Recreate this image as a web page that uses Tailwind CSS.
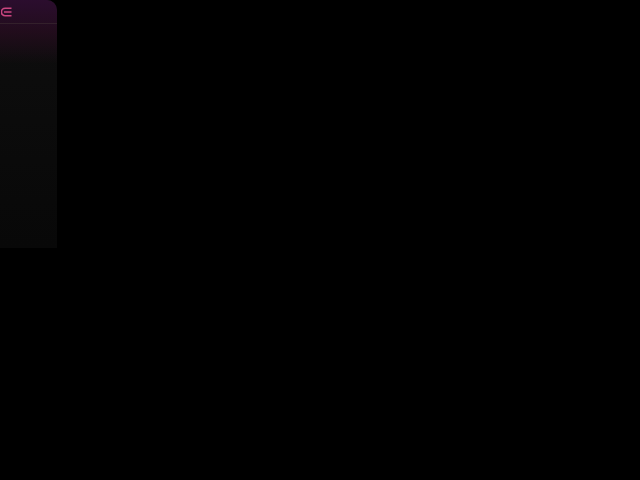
<!DOCTYPE html>
<html lang="en">
<head>
  <meta charset="UTF-8">
  <title>Panel</title>
  <script src="https://cdn.jsdelivr.net/npm/@tailwindcss/browser@4"></script>
</head>
<body class="bg-black w-[640px] h-[480px] overflow-hidden">
  <aside class="w-[57px] h-[248px] rounded-tr-[10px] bg-gradient-to-b from-[#0e0e0e] to-[#080808] overflow-hidden">
    <div class="h-[64px] bg-gradient-to-b from-[#2b0d2e] via-[#2a0c22]/70 to-transparent">
      <header class="h-[24px] flex items-center border-b border-[#33202b]">
        <svg class="w-[12px] h-[10px] ml-[1px] text-[#c9457f]" viewBox="0 0 12 10" fill="none" stroke="currentColor" stroke-width="1.6">
          <path d="M10.5 1.2H4.2a3.8 3.8 0 0 0 0 7.6H10.5"/>
          <path d="M3 5h7.5"/>
        </svg>
      </header>
    </div>
  </aside>
</body>
</html>
